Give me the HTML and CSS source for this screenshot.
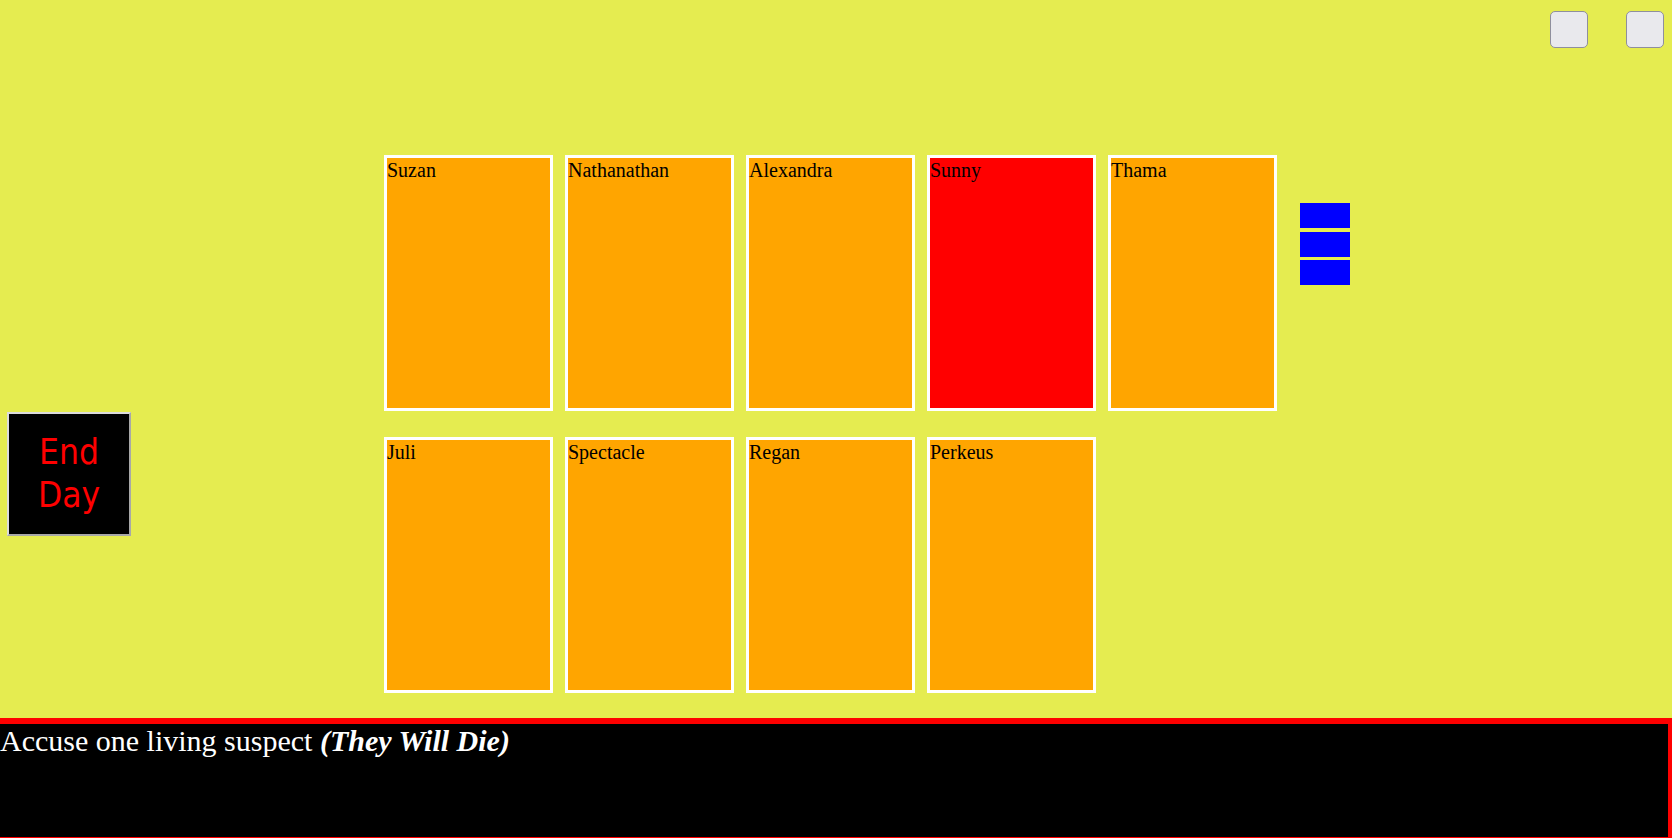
FILE: index.html
```html
<!DOCTYPE html>
<html>
<head>
<meta charset="utf-8">
<link rel="stylesheet" href="styles.css">
</head>
<body>
<div class="page">
  <header class="header">
    <button class="ctl"></button>
    <button class="ctl"></button>
  </header>
  <main class="board">
    <div class="side">
      <button class="end-day">End<br>Day</button>
    </div>
    <div class="grid">
      <div class="card">Suzan</div>
      <div class="card">Nathanathan</div>
      <div class="card">Alexandra</div>
      <div class="card card-red">Sunny</div>
      <div class="card">Thama</div>
      <div class="card">Juli</div>
      <div class="card">Spectacle</div>
      <div class="card">Regan</div>
      <div class="card">Perkeus</div>
    </div>
    <div class="bars">
      <div class="bar"></div>
      <div class="bar"></div>
      <div class="bar"></div>
    </div>
  </main>
  <footer class="log">Accuse one living suspect <b><i>(They Will Die)</i></b></footer>
</div>
</body>
</html>
```
FILE: styles.css
```css
html, body {
  margin: 0;
  padding: 0;
}
body {
  background: #e5ec50;
  width: 1672px;
  height: 838px;
  overflow: hidden;
  font-family: "Liberation Serif", "Times New Roman", serif;
}
.page {
  display: flex;
  flex-direction: column;
  height: 838px;
}
.header {
  display: flex;
  justify-content: flex-end;
  gap: 38px;
  height: 48px;
  box-sizing: border-box;
  padding: 11px 8px 0 0;
}
.ctl {
  width: 38px;
  height: 37px;
  background: #e9e9ed;
  border: 1px solid #8f8f9d;
  border-radius: 5px;
  padding: 0;
  margin: 0;
}
.board {
  display: flex;
  align-items: flex-start;
  height: 670px;
}
.side {
  width: 384px;
  box-sizing: border-box;
  padding: 364px 0 0 7px;
}
.end-day {
  width: 124px;
  height: 124px;
  box-sizing: border-box;
  background: #000;
  color: #ff0000;
  border: 2px solid;
  border-color: #dcdcdc #a8a8a8 #a8a8a8 #dcdcdc;
  font-family: "DejaVu Sans Condensed", "DejaVu Sans", sans-serif;
  font-size: 35px;
  line-height: 43px;
  padding: 0;
  margin: 0;
  text-align: center;
}
.grid {
  margin-top: 107px;
  display: grid;
  grid-template-columns: repeat(5, 169px);
  grid-auto-rows: 256px;
  column-gap: 12px;
  row-gap: 26px;
}
.card {
  box-sizing: border-box;
  background: #ffa500;
  border: 3px solid #fff;
  padding-top: 1px;
  font-size: 20px;
  color: #000;
}
.card-red {
  background: #ff0000;
}
.bars {
  margin: 155px 0 0 23px;
  display: flex;
  flex-direction: column;
  gap: 3.5px;
}
.bar {
  width: 50px;
  height: 25px;
  background: #0000ff;
}
.log {
  height: 120px;
  box-sizing: border-box;
  background: #000;
  border-top: 6px solid #ff0000;
  border-right: 4px solid #ff0000;
  border-bottom: 1px solid #ff0000;
  color: #fff;
  font-size: 30px;
}
```
